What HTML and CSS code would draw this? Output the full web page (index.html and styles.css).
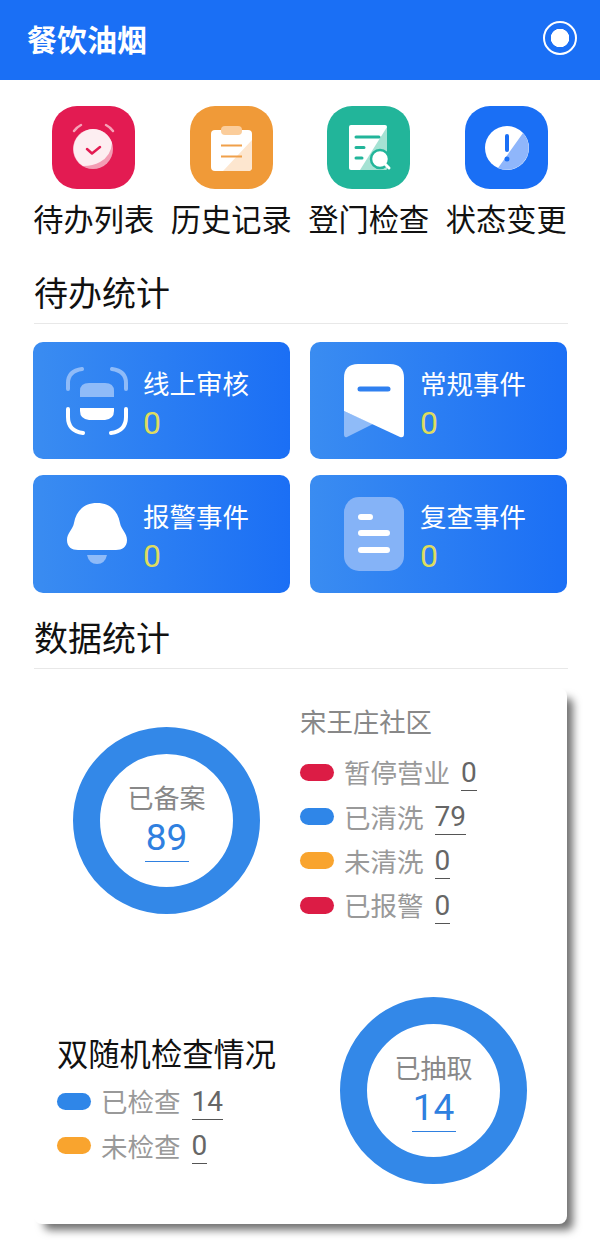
FILE: index.html
```html
<!DOCTYPE html>
<html lang="zh-CN">

<head>
  <meta charset="UTF-8">
  <meta name="viewport" content="width=device-width, initial-scale=1.0">
  <title>餐饮油烟</title>
  <link rel="stylesheet" href="styles.css">
</head>

<body>
  <header class="topbar">
    <h1 class="topbar-title">餐饮油烟</h1>
    <span class="topbar-dot"></span>
  </header>

  <nav class="shortcuts">
    <a class="shortcut">
      <svg class="shortcut-icon" viewBox="0 0 83 83">
        <rect width="83" height="83" rx="25" fill="#e31b52" />
        <path d="M22 25q3-4 7-6M54 19q4 2 7 6" fill="none" stroke="#f6a3b8" stroke-width="2.500" stroke-linecap="round" />
        <circle cx="41" cy="43" r="20" fill="#f39db4" />
        <path d="M41 23a20 20 0 0 1 19 14q-1 13-12 19q-7 4-17 4a20 20 0 0 1 10-37z" fill="#fdeef1" />
        <path d="M35 43l5 4.500l8-6.500" fill="none" stroke="#e31b52" stroke-width="2.500" stroke-linecap="round" stroke-linejoin="round" />
      </svg>
      <span class="shortcut-label">待办列表</span>
    </a>
    <a class="shortcut">
      <svg class="shortcut-icon" viewBox="0 0 83 83">
        <rect width="83" height="83" rx="25" fill="#f09a38" />
        <rect x="21" y="24" width="41" height="41" rx="4" fill="#fff" />
        <path d="M62 34v27a4 4 0 0 1-4 4H33z" fill="#fde6cf" />
        <rect x="31" y="20" width="21" height="9" rx="4" fill="#fbcd9b" />
        <path d="M31 39.500h21M31 50.500h21" stroke="#f0a04a" stroke-width="2" />
      </svg>
      <span class="shortcut-label">历史记录</span>
    </a>
    <a class="shortcut">
      <svg class="shortcut-icon" viewBox="0 0 83 83">
        <rect width="83" height="83" rx="25" fill="#22b59a" />
        <rect x="22" y="19" width="38" height="45" rx="2" fill="#fff" />
        <path d="M60 21v41a2 2 0 0 1-2 2H33z" fill="#a5e2d3" />
        <path d="M29 31h23M29 41.500h8M29 52h6" stroke="#22b59a" stroke-width="3" stroke-linecap="round" />
        <circle cx="53" cy="53" r="9" fill="#fff" stroke="#22b59a" stroke-width="2.500" />
        <path d="M58 58l4 4" stroke="#fff" stroke-width="3" stroke-linecap="round" />
      </svg>
      <span class="shortcut-label">登门检查</span>
    </a>
    <a class="shortcut">
      <svg class="shortcut-icon" viewBox="0 0 83 83">
        <rect width="83" height="83" rx="25" fill="#1a6ff5" />
        <circle cx="42" cy="42" r="22" fill="#fff" />
        <path d="M58 27a22 22 0 0 1-25 35z" fill="#8fb6fb" />
        <path d="M42 30v14" stroke="#1a6ff5" stroke-width="4" stroke-linecap="round" />
        <circle cx="42" cy="53" r="2.500" fill="#1a6ff5" />
      </svg>
      <span class="shortcut-label">状态变更</span>
    </a>
  </nav>

  <h2 class="section-title todo-title">待办统计</h2>
  <section class="todo-grid">
    <div class="todo-card">
      <div class="todo-icon">
        <svg width="62" height="68" viewBox="0 0 62 68">
          <path d="M2 22v-6q0-12 14-14M46 2q14 2 14 14v6" fill="none" stroke="#8fbbf8" stroke-width="4" stroke-linecap="round" />
          <path d="M14 30v-6q0-8 9-8h16q9 0 9 8v6z" fill="#8fbbf8" />
          <path d="M14 41h34v3q0 8-9 9H23q-9-1-9-9z" fill="#fff" />
          <path d="M2 42v8q0 14 15 16M45 66q15-2 15-16v-8" fill="none" stroke="#fff" stroke-width="4" stroke-linecap="round" />
        </svg>
      </div>
      <div class="todo-text">
        <span class="todo-name">线上审核</span>
        <span class="todo-count">0</span>
      </div>
    </div>
    <div class="todo-card">
      <div class="todo-icon">
        <svg width="60" height="74" viewBox="0 0 60 74">
          <path d="M0 47l29 13l-26 13q-3 1-3-3z" fill="#8fbbf8" />
          <path d="M0 47V14Q0 0 14 0h32q14 0 14 14v56q0 4-4 3L0 47z" fill="#fff" />
          <path d="M16 25h28" stroke="#2f80f0" stroke-width="5" stroke-linecap="round" />
        </svg>
      </div>
      <div class="todo-text">
        <span class="todo-name">常规事件</span>
        <span class="todo-count">0</span>
      </div>
    </div>
    <div class="todo-card">
      <div class="todo-icon">
        <svg width="62" height="62" viewBox="0 0 62 62">
          <path d="M31 0C44 0 52 8 54 20C55 26 61 30 61 37C61 44 56 47 50 47H12C6 47 1 44 1 37C1 30 7 26 8 20C10 8 18 0 31 0z" fill="#fff" />
          <path d="M21 52h20q-2 9-10 9t-10-9z" fill="#8fbbf8" />
        </svg>
      </div>
      <div class="todo-text">
        <span class="todo-name">报警事件</span>
        <span class="todo-count">0</span>
      </div>
    </div>
    <div class="todo-card">
      <div class="todo-icon">
        <svg width="60" height="74" viewBox="0 0 60 74">
          <rect width="60" height="74" rx="15" fill="#85b3f7" />
          <path d="M17 20h9M17 36h26M17 53h26" stroke="#fff" stroke-width="6" stroke-linecap="round" />
        </svg>
      </div>
      <div class="todo-text">
        <span class="todo-name">复查事件</span>
        <span class="todo-count">0</span>
      </div>
    </div>
  </section>

  <h2 class="section-title data-title">数据统计</h2>
  <section class="stat-card">
    <div class="stat-top">
      <div class="ring">
        <span class="ring-label">已备案</span>
        <span class="ring-num">89</span>
      </div>
      <div class="legend legend-top">
        <div class="legend-head">宋王庄社区</div>
        <div class="legend-row"><i class="pill pill-red"></i><span class="legend-name">暂停营业</span><span class="legend-num">0</span></div>
        <div class="legend-row"><i class="pill pill-blue"></i><span class="legend-name">已清洗</span><span class="legend-num">79</span></div>
        <div class="legend-row"><i class="pill pill-orange"></i><span class="legend-name">未清洗</span><span class="legend-num">0</span></div>
        <div class="legend-row"><i class="pill pill-red"></i><span class="legend-name">已报警</span><span class="legend-num">0</span></div>
      </div>
    </div>
    <div class="stat-bottom">
      <div class="legend legend-bottom">
        <div class="legend-title">双随机检查情况</div>
        <div class="legend-row"><i class="pill pill-blue"></i><span class="legend-name">已检查</span><span class="legend-num">14</span></div>
        <div class="legend-row"><i class="pill pill-orange"></i><span class="legend-name">未检查</span><span class="legend-num">0</span></div>
      </div>
      <div class="ring">
        <span class="ring-label">已抽取</span>
        <span class="ring-num">14</span>
      </div>
    </div>
  </section>
</body>

</html>
```

FILE: styles.css
```css
* {
  box-sizing: border-box;
}

body {
  margin: 0;
  padding-bottom: 24px;
  background: #fff;
  font-family: "Noto Sans CJK SC", "Noto Sans", sans-serif;
  color: #111;
}

.topbar {
  height: 80px;
  padding: 0 23px 0 27px;
  background: #1a6ff5;
  display: flex;
  align-items: center;
  justify-content: space-between;
}

.topbar-title {
  margin: -4px 0 0;
  font-size: 30px;
  line-height: 40px;
  font-weight: 700;
  color: #fff;
}

.topbar-dot {
  width: 34px;
  height: 34px;
  margin-top: -4px;
  border: 2px solid #fff;
  border-radius: 50%;
  background: radial-gradient(circle, #fff 0 9px, transparent 9.5px);
}

.shortcuts {
  margin: 0 25px;
  padding-top: 26px;
  display: grid;
  grid-template-columns: repeat(4, 137.5px);
}

.shortcut {
  display: flex;
  flex-direction: column;
  align-items: center;
}

.shortcut-icon {
  width: 83px;
  height: 83px;
  display: block;
}

.shortcut-label {
  margin-top: 9px;
  font-size: 30.200px;
  line-height: 40px;
  white-space: nowrap;
}

.section-title {
  width: 534px;
  height: 55px;
  margin: 0 0 0 34px;
  border-bottom: 1px solid #e8e8e8;
  font-size: 34px;
  line-height: 46px;
  font-weight: 400;
}

.todo-title {
  margin-top: 31px;
}

.data-title {
  margin-top: 21px;
}

.todo-grid {
  margin: 18px 0 0 33px;
  display: grid;
  grid-template-columns: repeat(2, 257px);
  grid-template-rows: 117px 118px;
  gap: 16px 20px;
}

.todo-card {
  padding-left: 33px;
  border-radius: 10px;
  background: linear-gradient(90deg, #3a8cf1, #1b6ff5);
  display: flex;
  align-items: center;
}

.todo-icon {
  width: 62px;
  display: flex;
  justify-content: center;
}

.todo-icon svg {
  display: block;
}

.todo-text {
  margin: 5px 0 0 15px;
  display: flex;
  flex-direction: column;
}

.todo-name {
  font-size: 26.500px;
  line-height: 36px;
  color: #fff;
}

.todo-count {
  margin-top: 3px;
  font-family: Roboto, sans-serif;
  font-size: 32px;
  line-height: 38px;
  color: #dedc5f;
}

.stat-card {
  width: 533px;
  height: 536px;
  margin: 19px 0 0 34px;
  border-radius: 8px;
  background: #fff;
  box-shadow: 8px 8px 8px -2px #707070;
}

.stat-top {
  height: 300px;
  padding-left: 39px;
  display: flex;
  align-items: flex-start;
}

.stat-bottom {
  padding-left: 23px;
  display: flex;
  align-items: flex-start;
}

.ring {
  width: 187px;
  height: 187px;
  border: 27px solid #3388e8;
  border-radius: 50%;
  display: flex;
  flex-direction: column;
  align-items: center;
  flex-shrink: 0;
}

.stat-top .ring {
  margin-top: 39px;
}

.stat-bottom .ring {
  margin-top: 9px;
  margin-left: 23px;
}

.ring-label {
  margin-top: 25px;
  font-size: 26px;
  line-height: 36px;
  color: #888;
}

.ring-num {
  width: 44px;
  padding-bottom: 1px;
  border-bottom: 1px solid #2f80e0;
  font-family: Roboto, sans-serif;
  font-size: 37px;
  line-height: 45px;
  text-align: center;
  color: #2f80e0;
}

.legend {
  width: 216px;
}

.legend-top {
  margin-left: 40px;
  padding-top: 13px;
}

.legend-bottom {
  width: 260px;
  padding-top: 45px;
}

.legend-head {
  margin-bottom: 9px;
  font-size: 26.400px;
  line-height: 40px;
  color: #888;
}

.legend-title {
  margin-bottom: 6px;
  font-size: 31.300px;
  line-height: 40px;
  color: #111;
}

.legend-row {
  height: 44.400px;
  display: flex;
  align-items: center;
  white-space: nowrap;
}

.pill {
  width: 34px;
  height: 17px;
  border-radius: 9px;
  flex-shrink: 0;
}

.pill-red {
  background: #dc1c45;
}

.pill-blue {
  background: #2f86e8;
}

.pill-orange {
  background: #f9a42e;
}

.legend-name {
  margin-left: 10px;
  font-size: 26.500px;
  line-height: 36px;
  color: #999;
}

.legend-num {
  margin-left: 11px;
  margin-top: 2px;
  border-bottom: 1px solid #555;
  font-family: Roboto, sans-serif;
  font-size: 28px;
  font-weight: 400;
  line-height: 34px;
  color: #666;
}
```
